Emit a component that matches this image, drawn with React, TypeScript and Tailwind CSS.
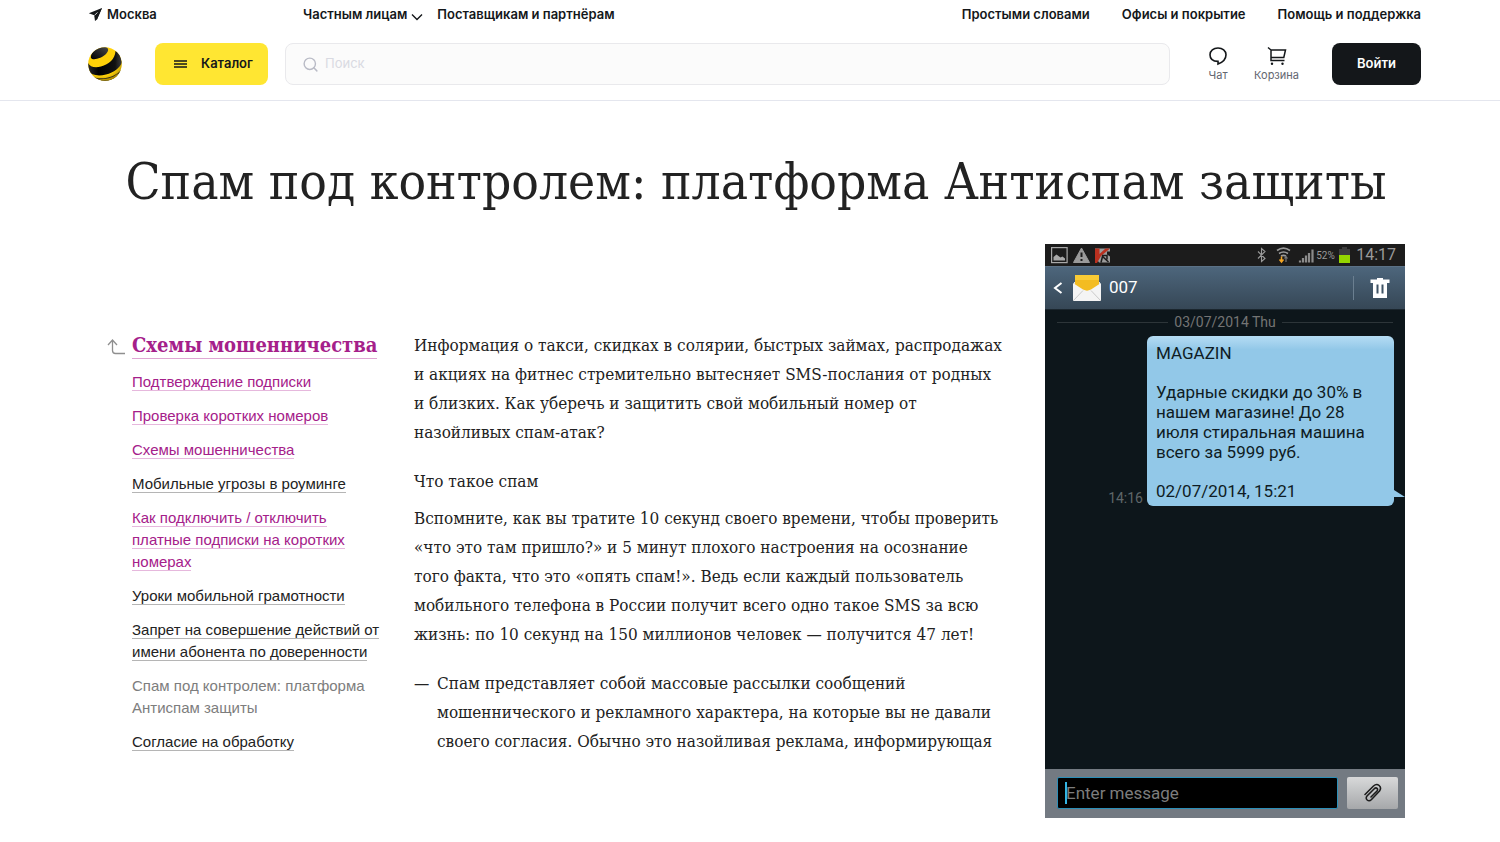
import React from 'react';
import { Search } from 'lucide-react';
import { clsx } from 'clsx';

interface SideLink {
  label: string;
  visited?: boolean;
  current?: boolean;
}

const sideLinks: SideLink[] = [
  { label: 'Подтверждение подписки', visited: true },
  { label: 'Проверка коротких номеров', visited: true },
  { label: 'Схемы мошенничества', visited: true },
  { label: 'Мобильные угрозы в роуминге' },
  { label: 'Как подключить / отключить платные подписки на коротких номерах', visited: true },
  { label: 'Уроки мобильной грамотности' },
  { label: 'Запрет на совершение действий от имени абонента по доверенности' },
  { label: 'Спам под контролем: платформа Антиспам защиты', current: true },
  { label: 'Согласие на обработку' },
];

const Logo = () => (
  <svg viewBox="0 0 34 34" className="size-[34px]" aria-hidden="true">
    <defs>
      <clipPath id="ball">
        <circle cx="17" cy="17" r="16.8" />
      </clipPath>
      <radialGradient id="sheen" cx="0.42" cy="0.38" r="0.66">
        <stop offset="0.7" stopColor="#000" stopOpacity="0" />
        <stop offset="1" stopColor="#000" stopOpacity="0.3" />
      </radialGradient>
      <linearGradient id="cap" x1="0" y1="1" x2="1" y2="0">
        <stop offset="0" stopColor="#000" />
        <stop offset="1" stopColor="#4a4a4a" />
      </linearGradient>
      <linearGradient id="stripe" x1="0" y1="0" x2="1" y2="0">
        <stop offset="0" stopColor="#2a2a2a" />
        <stop offset="0.3" stopColor="#000" />
        <stop offset="0.8" stopColor="#111" />
        <stop offset="1" stopColor="#444" />
      </linearGradient>
    </defs>
    <g clipPath="url(#ball)">
      <rect width="34" height="34" fill="#ffd108" />
      <path d="M3 11C2 5 10-1 17 0c4 .5 4 4 1 7C14 11 5 14 3 11z" fill="url(#cap)" />
      <path d="M0 16c2 4 7 5 13 3.500C21 17.500 27 12 27.500 4l4 2L34 15c-2 6-8 10.500-16 12.500C10 29.500 3 28 0 24z" fill="url(#stripe)" />
      <path d="M5 30c9 3.500 23 0 29-8l-3 10-14 3H7z" fill="#3a3420" />
      <path d="M10 32c8 1 16-1.500 20.500-6l-2 4c-4 3-10 4-15 3.500z" fill="#e6b800" />
      <circle cx="17" cy="17" r="17" fill="url(#sheen)" />
    </g>
  </svg>
);

const Header = () => (
  <header className="border-b border-[#e4e6ee] pl-[88px] pr-[79px] pb-[15px] font-['Inter',sans-serif] text-[#14171a]">
    <nav className="flex h-[29px] items-center text-[13px] font-semibold">
      <a href="#" className="flex w-[215px] items-center gap-1">
        <svg viewBox="0 0 15 15" className="size-[15px]" aria-hidden="true">
          <path d="M14 1 .8 6.200l5.400 2.100.8 5.700 2-1.500z" fill="#14171a" />
          <path d="M14 1 9 12.500 6.200 8.300z" fill="#14171a" />
          <path d="M6.400 8.400 9.500 5.500" stroke="#fff" strokeWidth="0.800" />
        </svg>
        Москва
      </a>
      <button className="flex items-center gap-1">
        Частным лицам
        <svg viewBox="0 0 12 8" className="mt-1 h-2 w-3" fill="none" stroke="#14171a" strokeWidth="1.400" aria-hidden="true">
          <path d="m1 1.500 5 5 5-5" />
        </svg>
      </button>
      <a href="#" className="ml-3.5">Поставщикам и партнёрам</a>
      <div className="ml-auto flex gap-8">
        <a href="#">Простыми словами</a>
        <a href="#">Офисы и покрытие</a>
        <a href="#">Помощь и поддержка</a>
      </div>
    </nav>
    <div className="mt-3.5 flex items-center">
      <a href="#" aria-label="Главная" className="mr-[33px]">
        <Logo />
      </a>
      <button className="flex h-[42px] w-[113px] items-center gap-3.5 rounded-lg bg-[#ffe632] pl-[19px] text-[13px] font-semibold">
        <svg viewBox="0 0 13 8" className="h-2 w-[13px]" stroke="#14171a" strokeWidth="1.500" aria-hidden="true">
          <path d="M0 1h13M0 4h13M0 7h13" />
        </svg>
        Каталог
      </button>
      <label className="ml-[17px] flex h-[42px] flex-1 items-center gap-1.5 rounded-lg border border-[#e9e9ec] bg-[#fbfbfb] px-4">
        <Search className="size-[17px] text-[#b9bbc6]" strokeWidth={2} />
        <input
          type="text"
          aria-label="Поиск"
          placeholder="Поиск"
          className="flex-1 bg-transparent text-[13px] outline-none placeholder:text-[#d9dae2]"
        />
      </label>
      <div className="ml-[38px] flex gap-[26px] pt-px text-[11px] text-[#63666f]">
        <a href="#" className="flex flex-col items-center gap-px">
          <svg viewBox="0 0 20 20" className="size-5" fill="none" stroke="#14171a" strokeWidth="1.600" aria-hidden="true">
            <path d="M10 18v-2.600c-4.700-.1-8-2.500-8-6.700C2 4.600 5.500 2 10 2s8 2.600 8 6.700c0 4.300-3.500 7.600-8 9.300z" />
          </svg>
          Чат
        </a>
        <a href="#" className="flex flex-col items-center gap-px">
          <svg viewBox="0 0 20 20" className="size-5" fill="none" stroke="#14171a" strokeWidth="1.500" aria-hidden="true">
            <path d="M1 1.500 4 4v10.500h13.500M4 4h14.500l-1.700 7.500H4" />
            <circle cx="5" cy="17.800" r="1.200" fill="#14171a" stroke="none" />
            <circle cx="15.500" cy="17.800" r="1.200" fill="#14171a" stroke="none" />
          </svg>
          Корзина
        </a>
      </div>
      <button className="ml-[33px] h-[42px] w-[89px] rounded-lg bg-[#14171a] text-[13px] font-semibold text-white">
        Войти
      </button>
    </div>
  </header>
);

const Sidebar = () => (
  <aside className="mt-[87px] flex w-[307px] shrink-0 gap-[7px]">
    <svg viewBox="0 0 18 18" className="mt-2 size-[18px] shrink-0" fill="none" stroke="#8f8f8f" strokeWidth="1.300" aria-hidden="true">
      <path d="M1 6 5.500 1 10 6M5.500 1v10.500c0 2 1 3 3 3H18" />
    </svg>
    <div className="w-[256px]">
      <h2 className="whitespace-nowrap font-['DejaVu_Serif_Condensed','DejaVu_Serif',serif] text-[20px] font-bold leading-[28px] text-[#a5208a]">
        <a href="#" className="border-b border-[#dfa6d3] pb-px">Схемы мошенничества</a>
      </h2>
      <ul className="mt-3 flex flex-col gap-3 text-[15px] leading-[22px]">
        {sideLinks.map((link) => (
          <li key={link.label}>
            {link.current ? (
              <span className="text-[#7d7d7d]">{link.label}</span>
            ) : (
              <a
                href="#"
                className={clsx(
                  'border-b',
                  link.visited ? 'border-[#e6b8dd] text-[#a5208a]' : 'border-[#b5b5b5] text-[#222222]'
                )}
              >
                {link.label}
              </a>
            )}
          </li>
        ))}
      </ul>
    </div>
  </aside>
);

const Article = () => (
  <article className="mt-[87px] min-w-0 flex-1 whitespace-nowrap font-['DejaVu_Serif_Condensed','DejaVu_Serif',serif] text-[17px] leading-[29px]">
    <p>
      Информация о такси, скидках в солярии, быстрых займах, распродажах<br />
      и акциях на фитнес стремительно вытесняет SMS-послания от родных<br />
      и близких. Как уберечь и защитить свой мобильный номер от<br />
      назойливых спам-атак?
    </p>
    <h3 className="mt-5">Что такое спам</h3>
    <p className="mt-2">
      Вспомните, как вы тратите 10 секунд своего времени, чтобы проверить<br />
      «что это там пришло?» и 5 минут плохого настроения на осознание<br />
      того факта, что это «опять спам!». Ведь если каждый пользователь<br />
      мобильного телефона в России получит всего одно такое SMS за всю<br />
      жизнь: по 10 секунд на 150 миллионов человек — получится 47 лет!
    </p>
    <ul className="mt-5">
      <li className="flex">
        <span className="w-[23px] shrink-0">—</span>
        <span>
          Спам представляет собой массовые рассылки сообщений<br />
          мошеннического и рекламного характера, на которые вы не давали<br />
          своего согласия. Обычно это назойливая реклама, информирующая
        </span>
      </li>
    </ul>
  </article>
);

const StatusBar = () => (
  <div className="flex h-[22px] items-center bg-[#1c1c1c] pl-[6px] pr-[9px] text-[#9a9a9a]">
    <svg viewBox="0 0 62 18" className="h-[18px] w-[62px]" aria-hidden="true">
      <rect x="0.600" y="1.600" width="15.500" height="15" fill="none" stroke="#a9a9a9" strokeWidth="1.200" />
      <path d="M2.500 14.500V11l3-2.500 4 3 2-1 2.500 2v2z" fill="#a9a9a9" />
      <path d="M30.500 2 38.500 16.500h-16z" fill="#9a9a9a" stroke="#9a9a9a" strokeLinejoin="round" />
      <path d="M30.500 6.500V11M30.500 13v2" stroke="#1c1c1c" strokeWidth="2" />
      <path d="M44 2.500h15v3h-3v3l3 2v6H48l-4-6z" fill="#9b9b9b" />
      <path d="M44 2.500h4.500v5.500l6-5.500H59l-9 7.500-4 7H44z" fill="#b9301f" />
      <path d="m50 16.500 1.500-6 6 5.500M51 9.500h5v4" fill="none" stroke="#1c1c1c" strokeWidth="1.500" />
    </svg>
    <svg viewBox="0 0 60 18" className="ml-auto h-[18px] w-[60px]" aria-hidden="true">
      <path d="m4 5.500 7 7-3.500 3V2.500L11 5.500l-7 7" fill="none" stroke="#9a9a9a" strokeWidth="1.100" />
      <path d="M23 4.500c4-3 9-3 13 0M25 7.500c3-2 6-2 9 0M27 10c2-1 3-1 5 0" fill="none" stroke="#9a9a9a" strokeWidth="1.600" />
      <path d="M27.500 10.500V16M25.500 13.500l2 2.500 2-2.500" fill="none" stroke="#f5a623" strokeWidth="1.500" />
      <path d="M32 16v-5M30.500 12.500l1.500-2 1.500 2" fill="none" stroke="#777" strokeWidth="1.200" />
      <path d="M46 16.500v-2M49 16.500V12M52 16.500v-7M55 16.500V7M58.500 16.500V3.500" stroke="#8b8b8b" strokeWidth="2.200" />
    </svg>
    <span className="ml-0.5 w-[21px] text-[10px]">52%</span>
    <svg viewBox="0 0 11 16" className="ml-0.5 h-4 w-[11px] shrink-0" aria-hidden="true">
      <path d="M3 0h5v2h3v6H0V2h3z" fill="#3c3c3c" />
      <path d="M0 8h11v8H0z" fill="#94d500" />
    </svg>
    <span className="ml-1.5 text-[16px]">14:17</span>
  </div>
);

const Phone = () => (
  <section aria-label="SMS" className="flex w-[360px] shrink-0 flex-col bg-[#0d161b] font-['Roboto',sans-serif]">
    <StatusBar />
    <div className="flex h-[44px] items-center border-y border-t-[#5b7186] border-b-[#1b262e] bg-linear-to-b from-[#4d667c] to-[#364756] pl-2 pr-[15px] text-white">
      <svg viewBox="0 0 10 12" className="h-3 w-2.5" fill="none" stroke="#fff" strokeWidth="2" aria-hidden="true">
        <path d="M8.500 1 2 6l6.500 5" />
      </svg>
      <svg viewBox="0 0 28 28" className="ml-2.5 size-7" aria-hidden="true">
        <path d="M1 8h26v19H1z" fill="#e4e4e4" />
        <path d="M2 1h24v12l-12 6L2 13z" fill="#f3bc22" />
        <path d="M2 1h24v5H2z" fill="#f9cb35" />
        <path d="M0 9l10 6.500c3 1.500 5 1.500 8 0L28 9v18H0z" fill="#f4f4f4" />
        <path d="m0 27 10-10.500M28 27 18 16.500" stroke="#c9c9c9" />
      </svg>
      <h4 className="ml-2 text-[17px]">007</h4>
      <span className="ml-auto h-6 w-px bg-[#6b7f90]" />
      <button aria-label="Delete" className="ml-4">
        <svg viewBox="0 0 20 22" className="h-[22px] w-5" aria-hidden="true">
          <path d="M7 1h6v1.500h6.500V6H17v15H3V6H.5V2.500H7z" fill="#fff" />
          <path d="M7.500 7.500v9M12.500 7.500v9" stroke="#3f5365" strokeWidth="2" />
        </svg>
      </button>
    </div>
    <div className="flex items-center gap-1.5 px-3 pt-0.5 text-[14px] leading-5 text-[#747474]">
      <span className="h-px flex-1 bg-[#2d3539]" />
      03/07/2014 Thu
      <span className="h-px flex-1 bg-[#2d3539]" />
    </div>
    <div className="mt-1 flex items-end justify-end gap-1 pr-[11px]">
      <time className="text-[14px] leading-4 text-[#5f6669]">14:16</time>
      <div className="relative w-[247px] rounded-md bg-linear-to-b from-[#b5dcf4] to-[#92c8e8] to-8% px-[9px] pb-[5px] pt-[7px] text-[17px] leading-5 text-[#0f1c24]">
        MAGAZIN
        <p className="my-[19px] whitespace-nowrap">
          Ударные скидки до 30% в<br />
          нашем магазине! До 28<br />
          июля стиральная машина<br />
          всего за 5999 руб.
        </p>
        02/07/2014, 15:21
        <svg viewBox="0 0 11 9" className="absolute -right-[11px] bottom-2 h-[9px] w-[11px]" aria-hidden="true">
          <path d="M0 1 11 8H0z" fill="#92c8e8" />
        </svg>
      </div>
    </div>
    <div className="mt-[263px] flex items-center gap-[9px] bg-[#737a82] pb-[9px] pl-[12px] pr-[7px] pt-2">
      <input
        type="text"
        aria-label="Message"
        placeholder="Enter message"
        className="h-8 min-w-0 flex-1 rounded-xs border border-[#2b8fb8] bg-black bg-linear-to-r from-[#33b5e5] to-[#33b5e5] bg-size-[2px_22px] bg-position-[7px_4px] bg-no-repeat px-2 text-[17px] text-white outline-none placeholder:text-[#7d7d7d]"
      />
      <button aria-label="Attach" className="flex h-8 w-[51px] items-center justify-center rounded-xs bg-linear-to-b from-[#d8d9da] to-[#a6a8aa]">
        <svg viewBox="0 0 20 20" className="size-5" fill="none" stroke="#1d1d1d" strokeWidth="1.600" strokeLinecap="round" aria-hidden="true">
          <path d="M2 11.500 10.500 3c4-3.500 9 .5 6 5L8.500 16.500c-3 3-7-.5-4.500-3.500l7.500-7.500c2-1.500 4 .5 2.500 2.500L8 14" />
        </svg>
      </button>
    </div>
  </section>
);

export default function App() {
  return (
    <div className="min-h-screen overflow-x-hidden bg-white font-['Liberation_Sans',sans-serif] text-[#222222]">
      <Header />
      <main className="pl-[107px] pr-[95px]">
        <h1 className="mt-[51px] whitespace-nowrap text-center font-['DejaVu_Serif_Condensed','DejaVu_Serif',serif] text-[51px] leading-[60px]">
          Спам под контролем: платформа Антиспам защиты
        </h1>
        <div className="mt-8 flex items-start">
          <Sidebar />
          <Article />
          <Phone />
        </div>
      </main>
    </div>
  );
}
